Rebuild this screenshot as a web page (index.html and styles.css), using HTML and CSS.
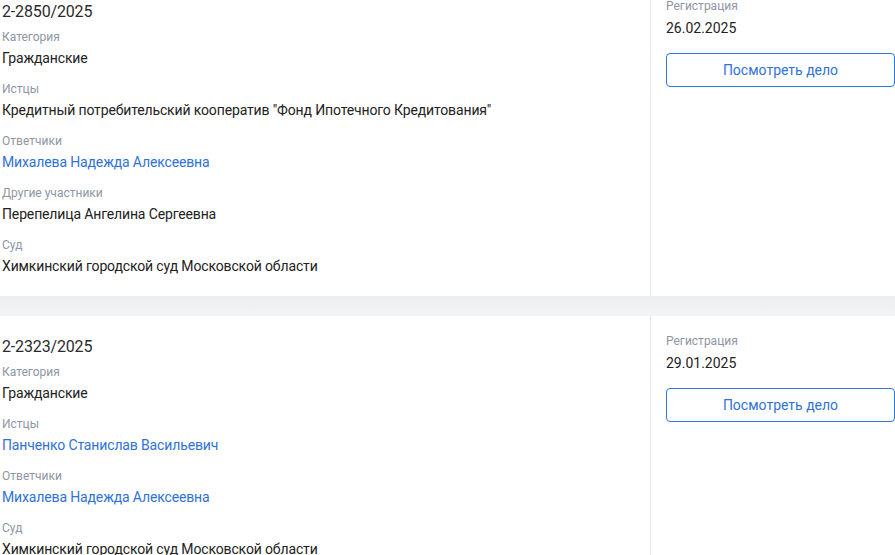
FILE: index.html
```html
<!DOCTYPE html>
<html lang="ru">
<head>
<meta charset="utf-8">
<link rel="stylesheet" href="styles.css">
</head>
<body>
<div class="list">
  <div class="card">
    <div class="main">
      <div class="title">2-2850/2025</div>
      <div class="field"><div class="label">Категория</div><div class="value">Гражданские</div></div>
      <div class="field"><div class="label">Истцы</div><div class="value">Кредитный потребительский кооператив "Фонд Ипотечного Кредитования"</div></div>
      <div class="field"><div class="label">Ответчики</div><div class="value link">Михалева Надежда Алексеевна</div></div>
      <div class="field"><div class="label">Другие участники</div><div class="value">Перепелица Ангелина Сергеевна</div></div>
      <div class="field"><div class="label">Суд</div><div class="value">Химкинский городской суд Московской области</div></div>
    </div>
    <div class="side">
      <div class="label">Регистрация</div>
      <div class="value">26.02.2025</div>
      <button class="btn">Посмотреть дело</button>
    </div>
  </div>
  <div class="sep"></div>
  <div class="card">
    <div class="main">
      <div class="title">2-2323/2025</div>
      <div class="field"><div class="label">Категория</div><div class="value">Гражданские</div></div>
      <div class="field"><div class="label">Истцы</div><div class="value link">Панченко Станислав Васильевич</div></div>
      <div class="field"><div class="label">Ответчики</div><div class="value link">Михалева Надежда Алексеевна</div></div>
      <div class="field"><div class="label">Суд</div><div class="value">Химкинский городской суд Московской области</div></div>
    </div>
    <div class="side">
      <div class="label">Регистрация</div>
      <div class="value">29.01.2025</div>
      <button class="btn">Посмотреть дело</button>
    </div>
  </div>
</div>
</body>
</html>
```

FILE: styles.css
```css
html, body {
  margin: 0;
  padding: 0;
  background: #fff;
  overflow: hidden;
}
body {
  font-family: Roboto, "Liberation Sans", sans-serif;
  color: #212529;
}
.list {
  margin-top: -19px;
  width: 896px;
}
.card {
  display: flex;
  background: #fff;
}
.main {
  width: 648px;
  padding: 20px 0 20px 2px;
  border-right: 1px solid #e6e8eb;
}
.title {
  font-size: 16px;
  line-height: 22px;
  color: #2b2b2b;
  letter-spacing: -0.15px;
  margin-bottom: 6px;
}
.field + .field {
  margin-top: 13px;
}
.label {
  font-size: 12px;
  line-height: 16px;
  color: #8e96a3;
  margin-bottom: 3px;
}
.value {
  font-size: 14px;
  line-height: 20px;
  color: #222;
  letter-spacing: -0.14px;
}
.link {
  color: #2f72d8;
}
.side {
  flex: 1;
  padding: 17px 1px 0 15px;
}
.side .label {
  margin-bottom: 4px;
}
.side .value {
  margin-bottom: 15px;
  letter-spacing: 0;
}
.btn {
  display: block;
  width: 229px;
  height: 34px;
  box-sizing: border-box;
  border: 1px solid #2f78e0;
  border-radius: 4px;
  background: #fff;
  color: #2f72d8;
  font-family: Roboto, "Liberation Sans", sans-serif;
  font-size: 14px;
  padding: 0;
}
.sep {
  height: 20px;
  background: linear-gradient(#eceef0, #f3f4f6);
}
```
